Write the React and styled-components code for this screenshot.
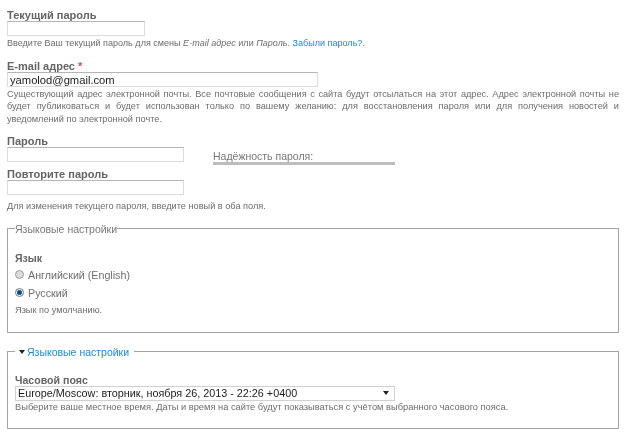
import React from "react";
import styled, { createGlobalStyle } from "styled-components";

const GlobalStyle = createGlobalStyle`
  html, body {
    margin: 0;
    padding: 0;
    background: #fff;
  }
  body {
    font-family: "Liberation Sans", Arial, sans-serif;
    color: #555;
  }
`;

const Page = styled.div`
  width: 624px;
  height: 434px;
  overflow: hidden;
  box-sizing: border-box;
  padding: 9px 5px 0 7px;
  filter: blur(0.3px);
`;

const Field = styled.div`
  margin-bottom: ${(p) => p.$gap || 0}px;
`;

const Label = styled.label`
  display: block;
  font-size: ${(p) => p.$size || 11}px;
  line-height: 12px;
  font-weight: bold;
  color: #646464;
`;

const Required = styled.span`
  color: #d6435f;
`;

const TextInput = styled.div`
  box-sizing: border-box;
  width: ${(p) => p.$width}px;
  height: 15px;
  border: 1px solid #dcdcdc;
  border-top-color: #b5b5b5;
  background: #fff;
  font-size: 11.2px;
  line-height: 14px;
  padding-left: 2px;
  color: #1c1c1c;
`;

const Help = styled.div`
  margin-top: ${(p) => p.$top ?? 1}px;
  font-size: ${(p) => p.$size || 9.2}px;
  line-height: 12.5px;
  color: #6c6c6c;
  em {
    font-style: italic;
  }
  a {
    color: #1e88d8;
    text-decoration: none;
  }
`;

const HelpLine = styled.span`
  display: block;
  text-align: justify;
  text-align-last: ${(p) => (p.$last ? "left" : "justify")};
`;

const PasswordRow = styled.div`
  display: flex;
  gap: 29px;
  margin-bottom: 3px;
`;

const Strength = styled.div`
  width: 182px;
  padding-top: 16px;
`;

const StrengthLabel = styled.div`
  font-size: 10.5px;
  line-height: 11px;
  color: #777;
`;

const StrengthBar = styled.div`
  height: 3px;
  background: #bdbdbd;
`;

const Fieldset = styled.fieldset`
  margin: 0 0 ${(p) => p.$gap || 0}px;
  padding: ${(p) => p.$top}px 7px 0;
  height: ${(p) => p.$height}px;
  box-sizing: border-box;
  border: 1px solid #a4a4a4;
  min-width: 0;
`;

const Legend = styled.legend`
  padding: 0;
  font-size: 10.5px;
  line-height: 12px;
  color: #777;
`;

const LinkLegend = styled(Legend)`
  display: flex;
  align-items: center;
  gap: 2px;
  padding: 0 5px 0 4px;
  color: #1e88d8;
`;

const Arrow = styled.span`
  width: 0;
  height: 0;
  border-left: 3px solid transparent;
  border-right: 3px solid transparent;
  border-top: 4px solid #222;
`;

const RadioList = styled.div`
  margin-top: 2px;
  margin-bottom: 2px;
`;

const RadioRow = styled.div`
  display: flex;
  align-items: center;
  gap: 4px;
  height: 18px;
  font-size: 10.7px;
  color: #6f6f6f;
`;

const Radio = styled.span`
  box-sizing: border-box;
  width: 9px;
  height: 9px;
  border-radius: 50%;
  border: 1px solid #9a9a9a;
  background: ${(p) => (p.$checked ? "#0f4c81" : "#dcdcdc")};
  box-shadow: ${(p) => (p.$checked ? "inset 0 0 0 1px #fff" : "none")};
`;

const Select = styled.div`
  box-sizing: border-box;
  display: flex;
  align-items: center;
  justify-content: space-between;
  width: 380px;
  height: 15px;
  border: 1px solid #d0d0d0;
  padding: 0 5px 0 2px;
  font-size: 10.8px;
  color: #1c1c1c;
`;

export default function App() {
  return (
    <Page>
      <GlobalStyle />
      <Field $gap={10}>
        <Label>Текущий пароль</Label>
        <TextInput $width={138} />
        <Help $size={9.05}>
          Введите Ваш текущий пароль для смены <em>E-mail адрес</em> или <em>Пароль</em>.{" "}
          <a href="#">Забыли пароль?</a>.
        </Help>
      </Field>
      <Field $gap={10}>
        <Label>
          E-mail адрес <Required>*</Required>
        </Label>
        <TextInput $width={311}>yamolod@gmail.com</TextInput>
        <Help>
          <HelpLine>
            Существующий адрес электронной почты. Все почтовые сообщения с сайта будут отсылаться на этот адрес. Адрес
            электронной почты не
          </HelpLine>
          <HelpLine>
            будет публиковаться и будет использован только по вашему желанию: для восстановления пароля или для
            получения новостей и
          </HelpLine>
          <HelpLine $last>уведомлений по электронной почте.</HelpLine>
        </Help>
      </Field>
      <PasswordRow>
        <Field>
          <Label>Пароль</Label>
          <TextInput $width={177} />
        </Field>
        <Strength>
          <StrengthLabel>Надёжность пароля:</StrengthLabel>
          <StrengthBar />
        </Strength>
      </PasswordRow>
      <Field $gap={10}>
        <Label>Повторите пароль</Label>
        <TextInput $width={177} />
        <Help $top={5}>Для изменения текущего пароля, введите новый в оба поля.</Help>
      </Field>
      <Fieldset $top={17} $height={110} $gap={13}>
        <Legend>Языковые настройки</Legend>
        <Label $size={10.5}>Язык</Label>
        <RadioList>
          <RadioRow>
            <Radio />
            Английский (English)
          </RadioRow>
          <RadioRow>
            <Radio $checked />
            Русский
          </RadioRow>
        </RadioList>
        <Help>Язык по умолчанию.</Help>
      </Fieldset>
      <Fieldset $top={16} $height={83}>
        <LinkLegend>
          <Arrow />
          Языковые настройки
        </LinkLegend>
        <Label $size={10.6}>Часовой пояс</Label>
        <Select>
          Europe/Moscow: вторник, ноября 26, 2013 - 22:26 +0400
          <Arrow />
        </Select>
        <Help $size={9.3} $top={0}>
          Выберите ваше местное время. Даты и время на сайте будут показываться с учётом выбранного часового пояса.
        </Help>
      </Fieldset>
    </Page>
  );
}
